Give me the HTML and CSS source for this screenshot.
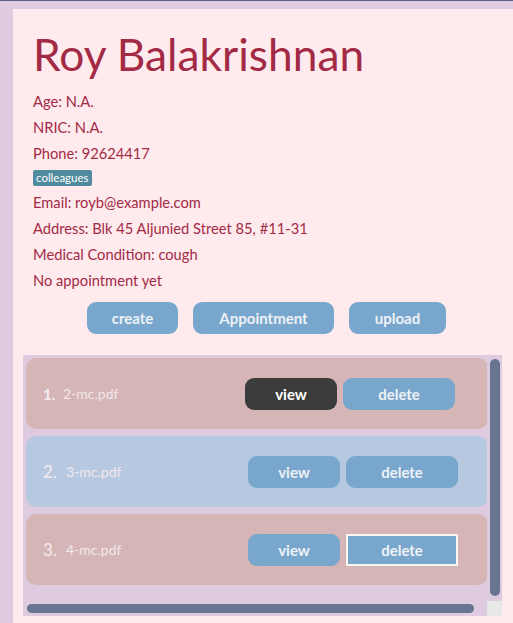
FILE: index.html
```html
<!DOCTYPE html>
<html>
<head>
<meta charset="utf-8">
<link rel="stylesheet" href="styles.css">
</head>
<body>
<div class="panel">
  <h1 class="name">Roy Balakrishnan</h1>
  <div class="info">
    <div class="row">Age: N.A.</div>
    <div class="row">NRIC: N.A.</div>
    <div class="row">Phone: 92624417</div>
    <div class="tagrow"><span class="tag">colleagues</span></div>
    <div class="row">Email: royb@example.com</div>
    <div class="row">Address: Blk 45 Aljunied Street 85, #11-31</div>
    <div class="row">Medical Condition: cough</div>
    <div class="row">No appointment yet</div>
  </div>
  <div class="actions">
    <button class="btn btn-create">create</button>
    <button class="btn btn-appt">Appointment</button>
    <button class="btn btn-upload">upload</button>
  </div>
  <div class="list">
    <div class="list-content">
      <div class="cell cell-odd">
        <span class="idx idx-first">1.</span>
        <span class="file">2-mc.pdf</span>
        <button class="cbtn cbtn-view cbtn-dark">view</button>
        <button class="cbtn cbtn-del">delete</button>
      </div>
      <div class="cell cell-even">
        <span class="idx">2.</span>
        <span class="file">3-mc.pdf</span>
        <button class="cbtn cbtn-view">view</button>
        <button class="cbtn cbtn-del">delete</button>
      </div>
      <div class="cell cell-odd">
        <span class="idx">3.</span>
        <span class="file">4-mc.pdf</span>
        <button class="cbtn cbtn-view">view</button>
        <button class="cbtn cbtn-del cbtn-focus">delete</button>
      </div>
    </div>
    <div class="vbar"><div class="vthumb"></div></div>
    <div class="hbar"><div class="hthumb"></div></div>
    <div class="corner"></div>
  </div>
</div>
</body>
</html>
```
FILE: styles.css
```css
html, body {
  margin: 0;
  padding: 0;
  height: 100%;
  overflow: hidden;
}
body {
  background: #dfcbe0;
  border-top: 1px solid #5b6484;
  box-sizing: border-box;
  font-family: "Lato", "Open Sans", sans-serif;
}
.panel {
  margin: 8px 0 0 13px;
  background: #ffebee;
  padding: 18px 0 0 10px;
  height: calc(100% - 8px);
  box-sizing: border-box;
}
.name {
  margin: 0 0 0 10px;
  font-size: 44.3px;
  line-height: 54px;
  font-weight: 400;
  color: #a32a45;
}
.info {
  margin-top: 7px;
  padding-left: 10px;
  color: #a32a45;
  font-size: 14.7px;
}
.row {
  height: 26px;
  line-height: 26px;
}
.tagrow {
  height: 23px;
  display: flex;
  align-items: center;
}
.tag {
  background: #4f8a9e;
  color: #ffffff;
  font-size: 11.5px;
  line-height: 16px;
  padding: 0 3px;
  border-radius: 2px;
}
.actions {
  display: flex;
  gap: 15px;
  margin-top: 9px;
  padding-left: 64px;
}
.btn {
  height: 32px;
  border: none;
  border-radius: 9px;
  background: #78a6cc;
  color: #eef2f7;
  font-family: inherit;
  font-size: 15px;
  font-weight: 700;
  padding: 0;
}
.btn-create { width: 91px; }
.btn-appt { width: 141px; }
.btn-upload { width: 97px; }
.list {
  margin-top: 21px;
  width: 479px;
  height: 261px;
  background: #dfcbe0;
  display: grid;
  grid-template-columns: 464px 15px;
  grid-template-rows: 246px 15px;
}
.list-content {
  padding: 3px 0 0 3px;
  display: flex;
  flex-direction: column;
  gap: 7px;
  overflow: hidden;
}
.cell {
  width: 462px;
  height: 71px;
  flex: none;
  border-radius: 10px;
  display: flex;
  align-items: center;
  padding-left: 17px;
  box-sizing: border-box;
}
.cell-odd { background: #d5b5b5; }
.cell-even { background: #b7c9e1; }
.idx {
  width: 23px;
  color: #f3ecf0;
  font-size: 17px;
}
.idx-first {
  width: 20px;
  font-weight: 700;
  font-size: 15px;
}
.file {
  width: 182px;
  color: #f3e8ec;
  font-size: 14px;
}
.cbtn {
  height: 32px;
  border: none;
  border-radius: 9px;
  background: #78a6cc;
  color: #eef2f7;
  font-family: inherit;
  font-size: 15px;
  font-weight: 700;
  padding: 0;
  box-sizing: border-box;
}
.cbtn-view { width: 92px; }
.cbtn-dark { background: #3c3c3c; color: #ffffff; }
.cbtn-del { width: 112px; margin-left: 6px; }
.cbtn-focus {
  border: 2px solid #fdf7f0;
  border-radius: 1px;
}
.vbar {
  padding: 4px 2px 5px 3px;
}
.vthumb {
  height: 100%;
  background: #687590;
  border-radius: 5px;
}
.hbar {
  padding: 3px 0 3px 4px;
}
.hthumb {
  width: 447px;
  height: 9px;
  background: #687590;
  border-radius: 5px;
}
.corner {
  background: #e8e8e8;
}
```
